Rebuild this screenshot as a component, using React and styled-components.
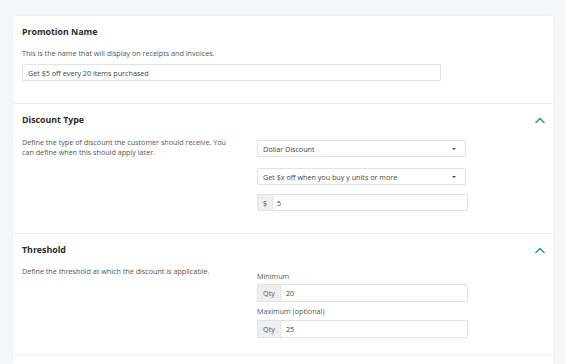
import React from "react";
import styled, { createGlobalStyle } from "styled-components";

const Global = createGlobalStyle`
    html, body { margin: 0; padding: 0; background: #fff; }
    body { font-family: "Open Sans", "Noto Sans", sans-serif; color: #333; }
`;

const Page = styled.div`
    width: 565px;
    height: 364px;
    box-sizing: border-box;
    padding: 16px 12px 0 13px;
    background: #f5f6f8;
    overflow: hidden;
`;

const Card = styled.div`
    background: #fff;
    border-radius: 3px 3px 0 0;
    box-shadow: 0 0 2px rgba(0, 0, 0, 0.08);
    height: 100%;
`;

const Section = styled.section`
    padding: 10px 8px ${p => p.$bottom || 22}px 9px;
    border-bottom: 1px solid #eceef0;
`;

const Header = styled.div`
    display: flex;
    justify-content: space-between;
    align-items: center;
    height: 12px;
`;

const Title = styled.h2`
    margin: 0;
    font-size: 8.8px;
    line-height: 12px;
    font-weight: 700;
    color: #2b2b2b;
`;

const Desc = styled.p`
    margin: ${p => p.$top || 0}px 0 0;
    max-width: 212px;
    font-size: 7.2px;
    line-height: 10px;
    color: #555;
`;

const Body = styled.div`
    display: grid;
    grid-template-columns: 235px 211px;
    margin-top: ${p => p.$top || 0}px;
`;

const Controls = styled.div`
    display: flex;
    flex-direction: column;
    padding-top: ${p => p.$top || 0}px;
`;

const Field = styled.div`
    display: flex;
    align-items: center;
    box-sizing: border-box;
    width: ${p => p.$width || 211}px;
    height: ${p => p.$height || 17}px;
    margin-top: ${p => p.$top || 0}px;
    border: 1px solid #e2e3e5;
    border-radius: 1px;
    background: #fff;
    font-size: 7.2px;
    color: #444;
`;

const Value = styled.span`
    flex: 1;
    padding-left: ${p => p.$pad || 7}px;
`;

const Addon = styled.span`
    display: flex;
    align-items: center;
    justify-content: center;
    align-self: stretch;
    width: ${p => p.$width}px;
    background: #eeeff1;
    border-right: 1px solid #e2e3e5;
    color: #555;
`;

const Caret = styled.span`
    width: 0;
    height: 0;
    margin-right: 9px;
    border-left: 2.5px solid transparent;
    border-right: 2.5px solid transparent;
    border-top: 2.5px solid #444;
`;

const Label = styled.div`
    font-size: 7.2px;
    line-height: 10px;
    color: #555;
    margin-top: ${p => p.$top || 0}px;
`;

const Chevron = () => (
    <svg width="10" height="7" viewBox="0 0 10 7">
        <path d="M1 5.5 L5 1.5 L9 5.5" fill="none" stroke="#2f9a93" strokeWidth="1.6" strokeLinecap="round" strokeLinejoin="round" />
    </svg>
);

export default function App() {
    return (
        <>
            <Global />
            <Page>
                <Card>
                    <Section $bottom={22}>
                        <Header><Title>Promotion Name</Title></Header>
                        <Desc $top={10} style={{ maxWidth: "none" }}>This is the name that will display on receipts and invoices.</Desc>
                        <Field $width={419} $top={6}>
                            <Value $pad={5}>Get $5 off every 20 items purchased</Value>
                        </Field>
                    </Section>
                    <Section $bottom={22}>
                        <Header><Title>Discount Type</Title><Chevron /></Header>
                        <Body $top={11}>
                            <Desc>Define the type of discount the customer should receive. You can define when this should apply later.</Desc>
                            <Controls $top={3}>
                                <Field $width={209}>
                                    <Value $pad={5}>Dollar Discount</Value>
                                    <Caret />
                                </Field>
                                <Field $width={209} $top={11}>
                                    <Value $pad={5}>Get $x off when you buy y units or more</Value>
                                    <Caret />
                                </Field>
                                <Field $width={211} $top={9}>
                                    <Addon $width={14}>$</Addon>
                                    <Value $pad={4}>5</Value>
                                </Field>
                            </Controls>
                        </Body>
                    </Section>
                    <Section $bottom={17}>
                        <Header><Title>Threshold</Title><Chevron /></Header>
                        <Body $top={10}>
                            <Desc>Define the threshold at which the discount is applicable.</Desc>
                            <Controls $top={5}>
                                <Label>Minimum</Label>
                                <Field $width={211} $height={18} $top={3}>
                                    <Addon $width={22}>Qty</Addon>
                                    <Value $pad={5}>20</Value>
                                </Field>
                                <Label $top={4}>Maximum (optional)</Label>
                                <Field $width={211} $height={18} $top={4}>
                                    <Addon $width={22}>Qty</Addon>
                                    <Value $pad={5}>25</Value>
                                </Field>
                            </Controls>
                        </Body>
                    </Section>
                </Card>
            </Page>
        </>
    );
}
